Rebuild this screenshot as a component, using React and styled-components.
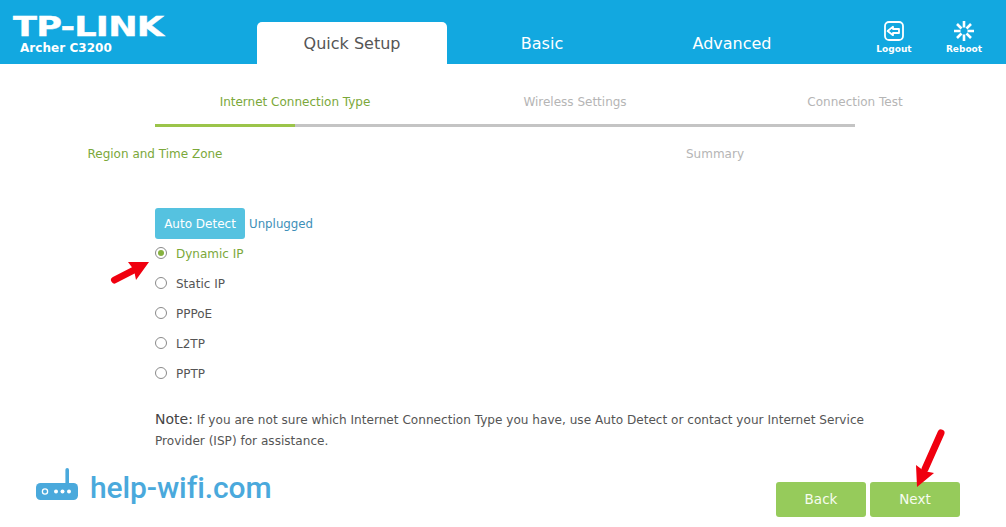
import React from "react";
import styled, { createGlobalStyle } from "styled-components";

const Global = createGlobalStyle`
  html, body { margin: 0; padding: 0; background: #fff; }
  body { font-family: "DejaVu Sans", Verdana, sans-serif; overflow: hidden; }
`;
const Page = styled.div`
  position: relative;
  width: 1006px;
  height: 527px;
  overflow: hidden;
`;
const Header = styled.header`
  height: 64px;
  background: #12a8e0;
  display: grid;
  grid-template-columns: 257px 190px 190px 190px 1fr;
  color: #fff;
`;
const Brand = styled.div`
  padding: 13px 0 0 13px;
  display: flex;
  flex-direction: column;
  overflow: hidden;
`;
const BrandMark = styled.div`
  font: 700 27px/27px "DejaVu Sans", sans-serif;
  transform: scaleX(1.3);
  transform-origin: left center;
  white-space: nowrap;
  letter-spacing: -0.6px;
  -webkit-text-stroke: 0.4px #fff;
`;
const Model = styled.div`
  font: 700 12px/15px "DejaVu Sans", sans-serif;
  margin: 1px 0 0 7px;
  letter-spacing: 0.05px;
`;
const Tab = styled.div`
  margin-top: 22px;
  border-radius: 5px 5px 0 0;
  display: flex;
  align-items: center;
  justify-content: center;
  font-size: 16px;
  background: ${p => (p.$active ? "#fff" : "transparent")};
  color: ${p => (p.$active ? "#555" : "#fff")};
`;
const Actions = styled.div`
  display: flex;
  padding: 21px 0 0 32px;
`;
const Action = styled.div`
  width: 70px;
  display: flex;
  flex-direction: column;
  align-items: center;
  font-size: 9px;
  line-height: 12px;
  font-weight: 700;
  gap: 2px;
`;
const Steps = styled.div`
  margin: 29px 0 0 85px;
  width: 840px;
  display: grid;
  grid-template-columns: repeat(6, 140px);
  grid-template-rows: 18px 16px 36px;
`;
const StepLabel = styled.div`
  grid-column: ${p => p.$col};
  grid-row: ${p => p.$row};
  display: flex;
  justify-content: center;
  align-self: end;
  font-size: 12px;
  line-height: 18px;
  white-space: nowrap;
  color: ${p => (p.$on ? "#7ba83a" : "#b5b5b5")};
`;
const Track = styled.div`
  grid-column: 1 / 7;
  grid-row: 2;
  margin: 13px 70px 0;
  height: 3px;
  background: #c4c4c4;
`;
const Progress = styled.div`
  width: 20%;
  height: 100%;
  background: #9bc44a;
`;
const Form = styled.section`
  margin: 45px 0 0 155px;
  width: 725px;
`;
const DetectRow = styled.div`
  display: flex;
  align-items: center;
  gap: 4px;
  height: 31px;
`;
const DetectButton = styled.div`
  width: 90px;
  height: 31px;
  border-radius: 3px;
  background: #55c2e0;
  color: #fff;
  display: flex;
  align-items: center;
  justify-content: center;
  font-size: 12px;
`;
const Status = styled.span`
  font-size: 11.8px;
  color: #3d8fb8;
`;
const Radios = styled.div`
  display: flex;
  flex-direction: column;
  margin-top: -1px;
`;
const RadioRow = styled.div`
  height: 30px;
  display: flex;
  align-items: center;
  gap: 9px;
  font-size: 12px;
  color: ${p => (p.$on ? "#7ba83a" : "#555")};
`;
const RadioText = styled.span`
  margin-top: 2px;
`;
const RadioDot = styled.span`
  width: 12px;
  height: 12px;
  box-sizing: border-box;
  border: 1.5px solid #8a8a8a;
  border-radius: 50%;
  display: flex;
  align-items: center;
  justify-content: center;
  &::after {
    content: "";
    width: 6px;
    height: 6px;
    border-radius: 50%;
    background: ${p => (p.$on ? "#86b13f" : "transparent")};
  }
`;
const Note = styled.p`
  margin: 21px 0 0;
  font-size: 12.1px;
  line-height: 21px;
  color: #555;
`;
const NoteLabel = styled.span`
  font-size: 14px;
  color: #444;
`;
const Footer = styled.footer`
  display: flex;
  justify-content: space-between;
  align-items: flex-start;
  margin-top: 30px;
  padding: 0 46px 0 36px;
`;
const Site = styled.div`
  display: flex;
  align-items: flex-start;
  gap: 12px;
  color: #4aa9dc;
  margin-top: -14px;
`;
const SiteName = styled.span`
  font: 500 30px/36px Roboto, sans-serif;
  margin-top: 2px;
  letter-spacing: -0.1px;
`;
const Buttons = styled.div`
  display: flex;
  gap: 4px;
`;
const NavButton = styled.div`
  width: 90px;
  height: 35px;
  box-sizing: border-box;
  padding-bottom: 2px;
  border-radius: 3px;
  background: #96cb5b;
  color: #f7fcf0;
  display: flex;
  align-items: center;
  justify-content: center;
  font-size: 13.5px;
`;
const Arrow = styled.svg`
  position: absolute;
  left: 0;
  top: 0;
  pointer-events: none;
`;

const LogoutIcon = () => (
  <svg width="20" height="20" viewBox="0 0 20 20" fill="none" stroke="#fff" strokeWidth="1.8" strokeLinejoin="round">
    <rect x="1" y="1" width="18" height="18" rx="4" />
    <path d="M3.6 10 9 5.8V8h6v4H9v2.2z" />
  </svg>
);
const RebootIcon = () => (
  <svg width="20" height="20" viewBox="1 0 20 20" stroke="#fff" strokeWidth="2.6">
    <path d="M11 0v6.5M11 13.5V20M1 10h6.5M14.5 10H21M4 3l4.5 4.5M13.5 12.5 18 17M18 3l-4.5 4.5M8.5 12.5 4 17" />
  </svg>
);
const RouterIcon = () => (
  <svg width="42" height="32" viewBox="0 0 42 32">
    <rect x="29.4" y="0" width="3.6" height="17" rx="1.8" fill="#4aa9dc" />
    <rect x="0" y="15" width="42" height="17" rx="4.5" fill="#4aa9dc" />
    <circle cx="9" cy="23.5" r="2.6" fill="none" stroke="#fff" strokeWidth="1.3" />
    <circle cx="20" cy="23.5" r="2" fill="#fff" />
    <circle cx="26.5" cy="23.5" r="2" fill="#fff" />
    <circle cx="33" cy="23.5" r="2" fill="#fff" />
  </svg>
);

const steps = [
  { label: "Internet Connection Type", col: 2, row: 1, on: true },
  { label: "Wireless Settings", col: 4, row: 1 },
  { label: "Connection Test", col: 6, row: 1 },
  { label: "Region and Time Zone", col: 1, row: 3, on: true },
  { label: "Summary", col: 5, row: 3 },
];
const types = ["Dynamic IP", "Static IP", "PPPoE", "L2TP", "PPTP"];

export default function App() {
  return (
    <Page>
      <Global />
      <Header>
        <Brand>
          <BrandMark>TP-LINK</BrandMark>
          <Model>Archer C3200</Model>
        </Brand>
        <Tab $active>Quick Setup</Tab>
        <Tab>Basic</Tab>
        <Tab>Advanced</Tab>
        <Actions>
          <Action><LogoutIcon />Logout</Action>
          <Action><RebootIcon />Reboot</Action>
        </Actions>
      </Header>
      <Steps>
        {steps.map(s => (
          <StepLabel key={s.label} $col={s.col} $row={s.row} $on={s.on}>{s.label}</StepLabel>
        ))}
        <Track><Progress /></Track>
      </Steps>
      <Form>
        <DetectRow>
          <DetectButton>Auto Detect</DetectButton>
          <Status>Unplugged</Status>
        </DetectRow>
        <Radios>
          {types.map((t, i) => (
            <RadioRow key={t} $on={i === 0}>
              <RadioDot $on={i === 0} />
              <RadioText>{t}</RadioText>
            </RadioRow>
          ))}
        </Radios>
        <Note>
          <NoteLabel>Note:</NoteLabel> If you are not sure which Internet Connection Type you have, use Auto Detect or contact your Internet Service Provider (ISP) for assistance.
        </Note>
      </Form>
      <Footer>
        <Site>
          <RouterIcon />
          <SiteName>help-wifi.com</SiteName>
        </Site>
        <Buttons>
          <NavButton>Back</NavButton>
          <NavButton>Next</NavButton>
        </Buttons>
      </Footer>
      <Arrow width="1006" height="527" viewBox="0 0 1006 527">
        <path d="M114.5 280 L134 270" stroke="#f0000f" strokeWidth="7" strokeLinecap="round" fill="none" />
        <path d="M149 262 L128 262 L134 270 L136 280 Z" fill="#f0000f" />
        <path d="M941 433 L925 469" stroke="#f0000f" strokeWidth="7" strokeLinecap="round" fill="none" />
        <path d="M917 487 L916 465 L924 471 L934 473 Z" fill="#f0000f" />
      </Arrow>
    </Page>
  );
}
